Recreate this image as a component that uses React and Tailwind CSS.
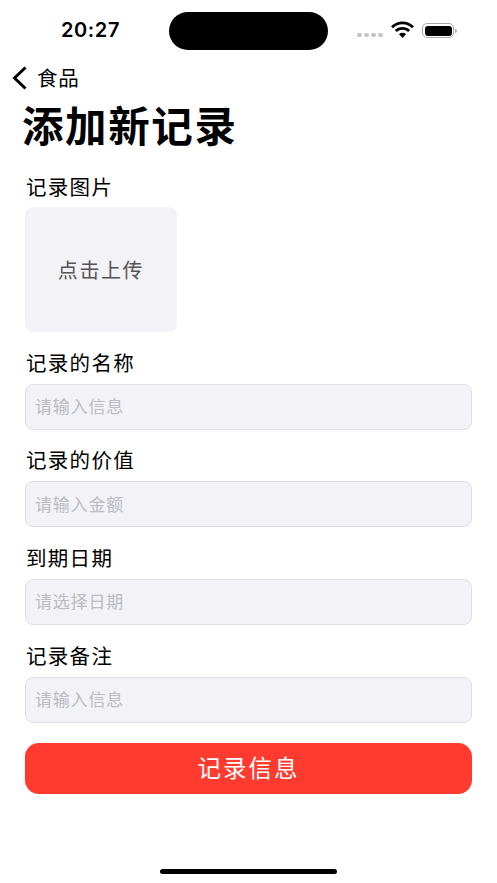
import React from "react";

const cjk = "font-['Noto_Sans_CJK_SC','Noto_Sans',sans-serif]";

const StatusBar = () => (
  <div className="flex h-[60px] items-start">
    <div className="w-[181px] pt-[18px] text-center font-['Inter',sans-serif] text-[20px] leading-[24px] font-semibold tracking-[0.6px] text-black">
      20:27
    </div>
    <div className="mt-[12px] ml-[-12px] h-[38px] w-[159px] rounded-full bg-black" />
    <div className="ml-[29px] mt-[33px] flex gap-[2px]">
      {[0, 1, 2, 3].map((i) => (
        <span key={i} className="h-[4px] w-[5px] rounded-full bg-[#c4c4c4]" />
      ))}
    </div>
    <svg className="mt-[21px] ml-[8px]" width="23" height="18" viewBox="0 0 23 18">
      <path d="M1 6.2a15 15 0 0 1 21 0" fill="none" stroke="#000" strokeWidth="2.8" />
      <path d="M4.8 10a9.6 9.6 0 0 1 13.4 0" fill="none" stroke="#000" strokeWidth="2.8" />
      <path d="M11.5 17l-3.5-3.7a5 5 0 0 1 7 0z" fill="#000" />
    </svg>
    <div className="mt-[23px] ml-[8px] flex items-center">
      <div className="h-[15px] w-[32px] rounded-[5px] border border-[#a8a8a8] p-[1.5px]">
        <div className="h-full w-full rounded-[3px] bg-black" />
      </div>
      <div className="ml-[1px] h-[4px] w-[1.5px] rounded-r bg-[#a8a8a8]" />
    </div>
  </div>
);

const Field = ({ label, placeholder }) => (
  <div className="mt-[16.67px]">
    <div className="pb-[2px] pl-[1px] text-[20.5px] leading-[26px] tracking-[1.3px] text-black">{label}</div>
    <div className="mt-[7px] flex h-[46px] items-center rounded-[8px] border border-[#dfdfe8] bg-[#f2f2f7] pb-[2px] pl-[9px] text-[17px] tracking-[0.8px] text-[#bcbcc2]">
      {placeholder}
    </div>
  </div>
);

export default function App() {
  return (
    <div className={`h-[883px] w-[497px] overflow-hidden bg-white ${cjk}`}>
      <StatusBar />
      <div className="flex h-[37px] items-center pb-[2px] pl-[11px]">
        <svg width="17" height="26" viewBox="0 0 17 26">
          <path d="M14.5 2.5L3.5 13l11 10.5" fill="none" stroke="#000" strokeWidth="3" />
        </svg>
        <span className="ml-[9px] text-[20.5px] tracking-[0.8px] text-black">食品</span>
      </div>
      <div className="mt-[4px] pl-[22px] text-[41.5px] leading-[46px] font-bold tracking-[1.6px] text-black">
        添加新记录
      </div>
      <div className="px-[25px] pt-[26px]">
        <div className="pb-[2px] pl-[1px] text-[20.5px] leading-[26px] tracking-[1.3px] text-black">记录图片</div>
        <div className="mt-[6px] flex h-[125px] w-[152px] items-center justify-center rounded-[8px] bg-[#f2f2f7] text-[20px] tracking-[1.6px] text-[#555]">
          点击上传
        </div>
        <Field label="记录的名称" placeholder="请输入信息" />
        <Field label="记录的价值" placeholder="请输入金额" />
        <Field label="到期日期" placeholder="请选择日期" />
        <Field label="记录备注" placeholder="请输入信息" />
        <div className="mt-[20px] flex h-[51px] items-center justify-center rounded-[14px] bg-[#ff3b30] pb-[2px] text-[23.5px] tracking-[2px] text-white">
          记录信息
        </div>
      </div>
      <div className="mx-auto mt-[75px] h-[5px] w-[177px] rounded-full bg-black" />
    </div>
  );
}
